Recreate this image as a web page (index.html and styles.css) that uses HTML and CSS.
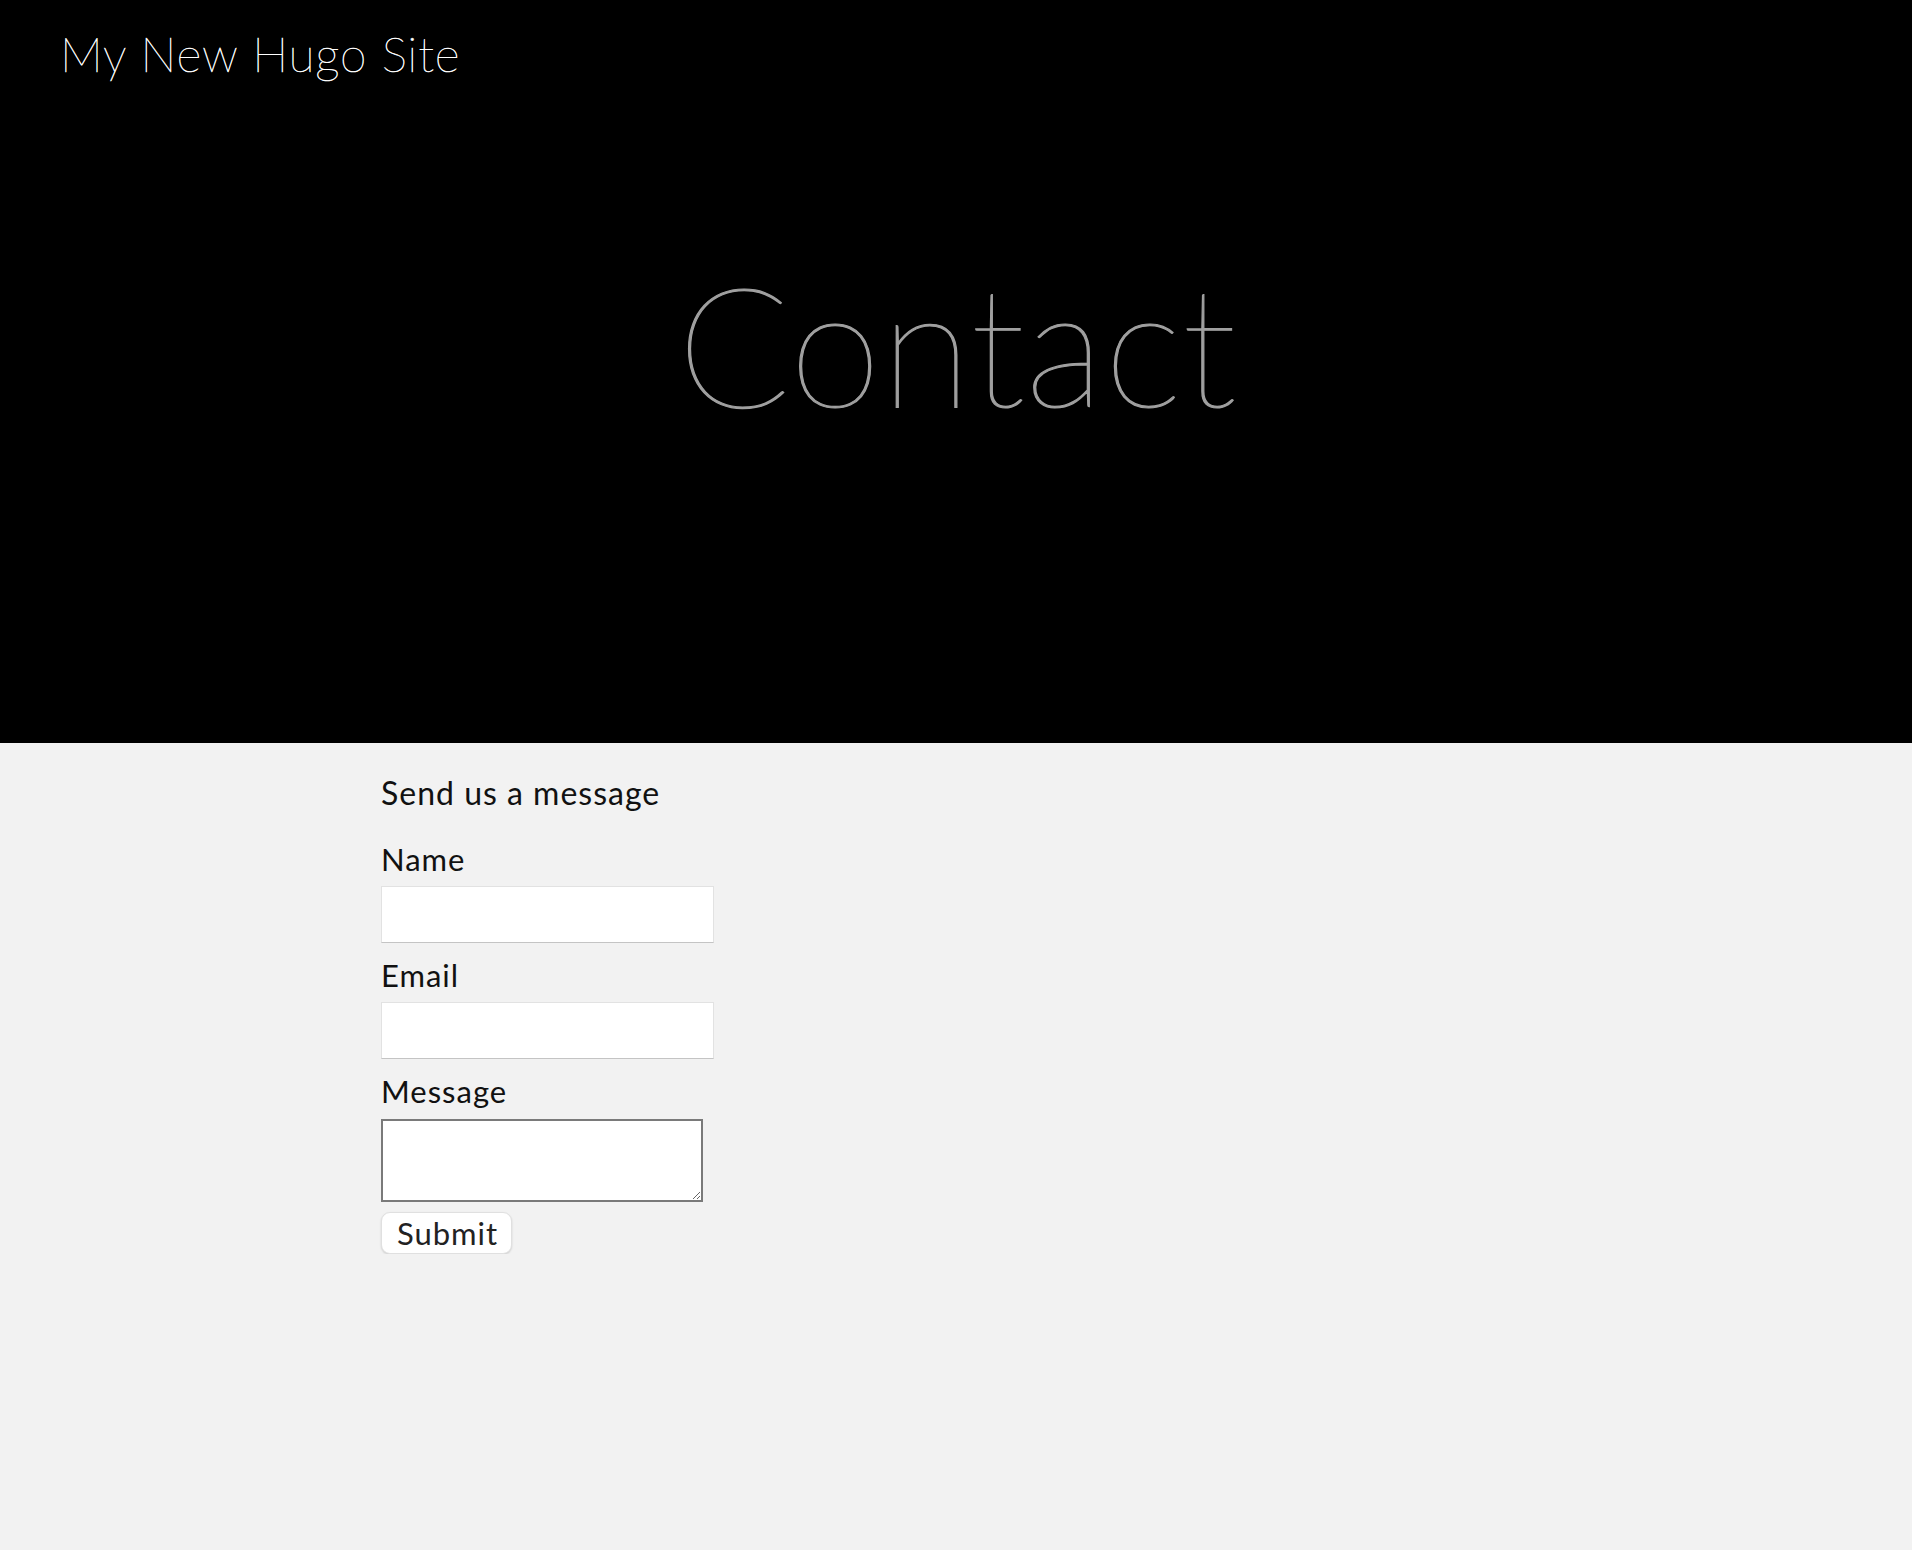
FILE: index.html
```html
<!DOCTYPE html>
<html lang="en">
<head>
    <meta charset="UTF-8">
    <meta name="viewport" content="width=device-width, initial-scale=1.0">
    <title>Contact | My New Hugo Site</title>
    <link rel="stylesheet" href="styles.css">
</head>
<body>
    <header class="site-header">
        <a class="site-title" href="#">My New Hugo Site</a>
        <div class="hero">
            <h1>Contact</h1>
        </div>
    </header>

    <main class="content">
        <form class="contact-form" action="#" method="post">
            <p class="form-intro">Send us a message</p>
            <label for="name">Name</label>
            <input id="name" name="name" type="text">
            <label for="email">Email</label>
            <input id="email" name="email" type="email">
            <label for="message">Message</label>
            <textarea id="message" name="message"></textarea>
            <button class="btn" type="submit">Submit</button>
        </form>
    </main>
</body>
</html>
```

FILE: styles.css
```css
body {
    font-family: Lato, "Open Sans", sans-serif;
    margin: 0;
    padding: 0;
    background-color: #f2f2f2;
    color: #111;
}

.site-header {
    height: 743px;
    background: #000;
    padding: 25px 0 0 60px;
    box-sizing: border-box;
}

.site-title {
    display: block;
    font-size: 48px;
    font-weight: 100;
    line-height: 1.2;
    letter-spacing: 0.8px;
    color: #fff;
    -webkit-text-stroke: 0.5px #fff;
    text-decoration: none;
}

.hero {
    padding-right: 58px;
    text-align: center;
}

.hero h1 {
    margin: 177px 0 0;
    font-size: 166px;
    font-weight: 100;
    line-height: 1;
    letter-spacing: 0.3px;
    color: #a0a0a0;
    -webkit-text-stroke: 1.2px #a0a0a0;
}

.content {
    padding: 31px 0 0 381px;
}

.contact-form {
    display: flex;
    flex-direction: column;
    align-items: flex-start;
}

.form-intro {
    margin: 0 0 20px;
    font-size: 32px;
    line-height: 1.2;
    letter-spacing: 1px;
}

label {
    font-size: 31px;
    line-height: 54px;
    letter-spacing: 1px;
}

input {
    width: 333px;
    height: 57px;
    margin: 0 0 5px;
    box-sizing: border-box;
    background: #fff;
    border: 1px solid #e2e2e2;
    border-bottom-color: #c4c4c4;
    font-family: inherit;
    font-size: 24px;
}

textarea {
    width: 322px;
    height: 83px;
    margin: 1px 0 0;
    box-sizing: border-box;
    background: #fff;
    border: 2px solid #7a7a7a;
    font-family: inherit;
}

.btn {
    width: 131px;
    height: 42px;
    margin-top: 10px;
    padding: 0 0 0 2px;
    background: #fff;
    color: #222;
    border: 1px solid #e0e0e0;
    border-radius: 9px;
    box-shadow: 0 1px 2px rgba(0, 0, 0, 0.15);
    font-family: inherit;
    font-size: 31px;
    line-height: 1;
    letter-spacing: 1px;
    cursor: pointer;
}
```
